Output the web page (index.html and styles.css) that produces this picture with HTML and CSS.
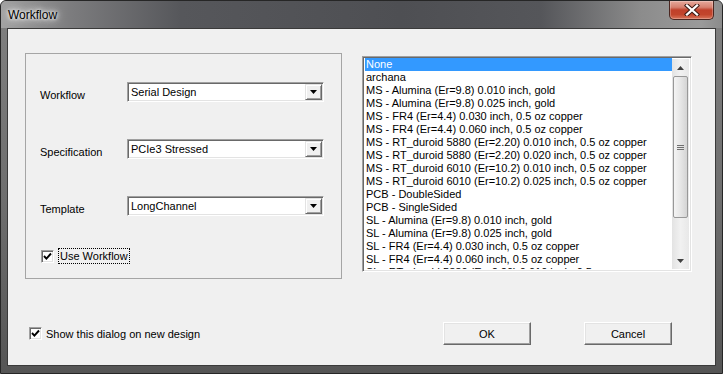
FILE: index.html
```html
<!DOCTYPE html>
<html>
<head>
<meta charset="utf-8">
<link rel="stylesheet" href="styles.css">
</head>
<body>
<div class="window">
  <div class="titlebar">
    <span class="title">Workflow</span>
    <div class="close">
      <svg width="16" height="12" viewBox="0 0 16 12"><path d="M3 1.5 L13 10.5 M13 1.5 L3 10.5" stroke="#3a1a14" stroke-width="4.2" stroke-linecap="square"/><path d="M3 1.5 L13 10.5 M13 1.5 L3 10.5" stroke="#ffffff" stroke-width="2.3" stroke-linecap="square"/></svg>
    </div>
  </div>
  <div class="frame">
    <div class="client">
      <div class="top">
        <div class="group">
          <div class="row">
            <span class="label">Workflow</span>
            <div class="combo"><span class="ctext">Serial Design</span><span class="drop"><svg width="7" height="4" viewBox="0 0 7 4"><path d="M0 0H7L3.5 4Z" fill="#000"/></svg></span></div>
          </div>
          <div class="row">
            <span class="label">Specification</span>
            <div class="combo"><span class="ctext">PCIe3 Stressed</span><span class="drop"><svg width="7" height="4" viewBox="0 0 7 4"><path d="M0 0H7L3.5 4Z" fill="#000"/></svg></span></div>
          </div>
          <div class="row">
            <span class="label">Template</span>
            <div class="combo"><span class="ctext">LongChannel</span><span class="drop"><svg width="7" height="4" viewBox="0 0 7 4"><path d="M0 0H7L3.5 4Z" fill="#000"/></svg></span></div>
          </div>
          <div class="checkrow">
            <span class="check"><svg width="9" height="9" viewBox="0 0 9 9"><path d="M1 4 L3.4 6.6 L8 1.5" stroke="#000" stroke-width="1.9" fill="none"/></svg></span>
            <span class="focus">Use Workflow</span>
          </div>
        </div>
        <div class="listbox">
          <div class="items">
            <div class="item sel">None</div>
            <div class="item">archana</div>
            <div class="item">MS - Alumina (Er=9.8) 0.010 inch, gold</div>
            <div class="item">MS - Alumina (Er=9.8) 0.025 inch, gold</div>
            <div class="item">MS - FR4 (Er=4.4) 0.030 inch, 0.5 oz copper</div>
            <div class="item">MS - FR4 (Er=4.4) 0.060 inch, 0.5 oz copper</div>
            <div class="item">MS - RT_duroid 5880 (Er=2.20) 0.010 inch, 0.5 oz copper</div>
            <div class="item">MS - RT_duroid 5880 (Er=2.20) 0.020 inch, 0.5 oz copper</div>
            <div class="item">MS - RT_duroid 6010 (Er=10.2) 0.010 inch, 0.5 oz copper</div>
            <div class="item">MS - RT_duroid 6010 (Er=10.2) 0.025 inch, 0.5 oz copper</div>
            <div class="item">PCB - DoubleSided</div>
            <div class="item">PCB - SingleSided</div>
            <div class="item">SL - Alumina (Er=9.8) 0.010 inch, gold</div>
            <div class="item">SL - Alumina (Er=9.8) 0.025 inch, gold</div>
            <div class="item">SL - FR4 (Er=4.4) 0.030 inch, 0.5 oz copper</div>
            <div class="item">SL - FR4 (Er=4.4) 0.060 inch, 0.5 oz copper</div>
            <div class="item">SL - RT_duroid 5880 (Er=2.20) 0.010 inch, 0.5 oz copper</div>
          </div>
          <div class="scrollbar">
            <div class="arrow"><svg width="7" height="4" viewBox="0 0 7 4"><path d="M0 4H7L3.5 0Z" fill="#404040"/></svg></div>
            <div class="thumb"><svg width="7" height="7" viewBox="0 0 7 7"><path d="M0 1.5H7M0 3.5H7M0 5.5H7" stroke="#6f6f6f" stroke-width="1"/></svg></div>
            <div class="track"></div>
            <div class="arrow"><svg width="7" height="4" viewBox="0 0 7 4"><path d="M0 0H7L3.5 4Z" fill="#404040"/></svg></div>
          </div>
        </div>
      </div>
      <div class="bottom">
        <div class="showrow">
          <span class="check"><svg width="9" height="9" viewBox="0 0 9 9"><path d="M1 4 L3.4 6.6 L8 1.5" stroke="#000" stroke-width="1.9" fill="none"/></svg></span>
          <span class="showtext">Show this dialog on new design</span>
        </div>
        <div class="buttons">
          <div class="btn">OK</div>
          <div class="btn">Cancel</div>
        </div>
      </div>
    </div>
  </div>
</div>
</body>
</html>
```
FILE: styles.css
```css
html, body { margin: 0; padding: 0; }
body { width: 723px; height: 374px; overflow: hidden; background: #ffffff; font-family: "Liberation Sans", Arial, sans-serif; font-size: 11px; color: #000; }

.window {
  width: 723px; height: 374px; box-sizing: border-box;
  border: 1px solid #262626; border-radius: 6px 6px 0 0;
  display: flex; flex-direction: column; overflow: hidden;
  background: #6a6a6a;
}
.titlebar {
  height: 27px; flex: none;
  display: flex; justify-content: space-between; align-items: flex-start;
  background: linear-gradient(90deg, #a2a2a2 0px, #7c7c7e 70px, #56575b 180px, #4e4f53 400px, #55565a 540px, #8c8c8c 640px, #9a9a9a 700px, #8a8a8a 723px);
}
.title {
  font-family: "Liberation Sans", Arial, sans-serif; font-size: 12px; color: #000;
  padding-left: 7px; line-height: 28px;
  text-shadow: 0 0 6px #ffffff, 0 0 10px #e8e8e8, 0 0 3px #ffffff;
}
.close {
  width: 45px; height: 19px; margin-right: 8px; box-sizing: border-box;
  border: 1px solid #4b2620; border-top: none; border-radius: 0 0 5px 5px;
  background: linear-gradient(180deg, #e7a99c 0%, #d6806f 35%, #c0402a 50%, #c2452c 75%, #d8745a 100%);
  display: flex; align-items: center; justify-content: center;
  box-shadow: inset 0 0 0 1px rgba(255,255,255,0.25);
}
.frame {
  flex: 1; display: flex; padding: 0 6px 7px 6px;
  background: linear-gradient(180deg, #7e7e7e 0%, #6e6e6e 50%, #555555 100%);
}
.client {
  flex: 1; display: flex; flex-direction: column;
  background: #f0f0f0; border: 1px solid #3a3a3a;
}
.top { display: flex; align-items: flex-start; padding-left: 17px; gap: 20px; }

.group {
  margin-top: 24px; width: 317px; height: 226px; box-sizing: border-box;
  border: 1px solid #a5a5a5;
  padding: 28px 0 0 14px;
  display: flex; flex-direction: column; gap: 37px;
}
.row { display: flex; align-items: center; height: 20px; }
.label { width: 87px; padding-top: 5px; }
.combo {
  width: 197px; height: 20px; box-sizing: border-box;
  border: 1px solid; border-color: #a0a0a0 #ffffff #ffffff #a0a0a0;
  box-shadow: inset 1px 1px 0 #696969, inset -1px -1px 0 #e3e3e3;
  background: #fff; display: flex; align-items: center; justify-content: space-between;
  padding: 1px 1px 1px 2px;
}
.ctext { padding-left: 1px; line-height: 16px; }
.drop {
  width: 17px; height: 16px; box-sizing: border-box;
  background: #f0f0f0;
  border: 1px solid; border-color: #e3e3e3 #696969 #696969 #e3e3e3;
  box-shadow: inset 1px 1px 0 #ffffff, inset -1px -1px 0 #a0a0a0;
  display: flex; align-items: center; justify-content: center;
}
.checkrow { display: flex; align-items: center; margin-top: -5px; height: 16px; padding-left: 1px; }
.check {
  width: 13px; height: 13px; box-sizing: border-box; flex: none;
  background: #fff; border: 1px solid; border-color: #a0a0a0 #ffffff #ffffff #a0a0a0;
  box-shadow: inset 1px 1px 0 #696969, inset -1px -1px 0 #e3e3e3;
  display: flex; align-items: center; justify-content: center;
}
.focus {
  margin-left: 4px; height: 16px; box-sizing: border-box;
  border: 1px dotted #000; padding: 0 1px; line-height: 14px;
  display: flex; align-items: center;
}

.listbox {
  margin-top: 27px; width: 330px; height: 216px; box-sizing: border-box;
  border: 1px solid; border-color: #a0a0a0 #ffffff #ffffff #a0a0a0;
  box-shadow: inset 1px 1px 0 #696969, inset -1px -1px 0 #e3e3e3;
  background: #fff; padding: 2px 2px 2px 2px;
  display: flex;
}
.items { flex: 1; overflow: hidden; margin-top: -1px; }
.item { height: 13px; line-height: 13px; padding-left: 1px; white-space: nowrap; font-size: 11px; }
.item.sel { background: #3399ff; color: #fff; }
.scrollbar {
  width: 17px; flex: none; display: flex; flex-direction: column;
  background: linear-gradient(90deg, #e3e3e3, #f1f1f1 50%, #e8e8e8);
}
.arrow { height: 17px; flex: none; display: flex; align-items: center; justify-content: center; }
.thumb {
  height: 142px; flex: none; box-sizing: border-box; margin: 0 1px;
  border: 1px solid #989898; border-radius: 2px;
  background: linear-gradient(90deg, #f4f4f4, #e6e6e6 50%, #d4d4d4);
  display: flex; align-items: center; justify-content: center;
}
.track { flex: 1; }

.bottom {
  margin-top: 43px; height: 23px; display: flex; align-items: center;
  padding: 0 43px 0 21px;
}
.showrow { display: flex; align-items: center; }
.showtext { margin-left: 4px; }
.buttons { margin-left: auto; display: flex; gap: 53px; }
.btn {
  width: 88px; height: 23px; box-sizing: border-box;
  border: 1px solid; border-color: #ffffff #696969 #696969 #ffffff;
  box-shadow: inset -1px -1px 0 #a0a0a0, inset 1px 1px 0 #e3e3e3;
  background: #f0f0f0; display: flex; align-items: center; justify-content: center;
}
```
